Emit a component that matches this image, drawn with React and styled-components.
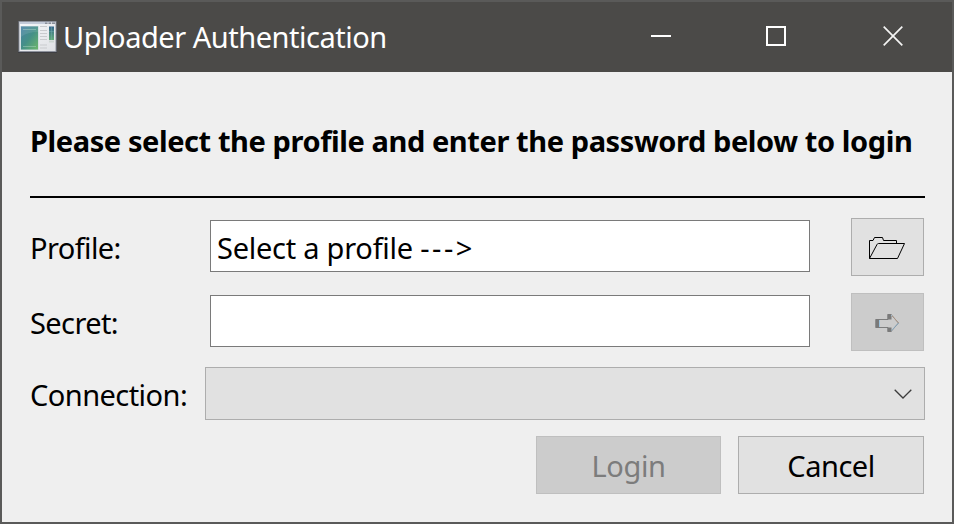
import React from "react";
import styled, { createGlobalStyle } from "styled-components";

const GlobalStyle = createGlobalStyle`
  * { box-sizing: border-box; }
  body {
    margin: 0;
    overflow: hidden;
    font-family: "Noto Sans", "Open Sans", sans-serif;
    font-size: 29px;
    color: #000;
  }
`;

const Window = styled.div`
  width: 954px;
  height: 524px;
  border: 2px solid #5a5a59;
  background: #efefef;
  display: flex;
  flex-direction: column;
`;

const TitleBar = styled.header`
  height: 70px;
  flex: none;
  padding-left: 16px;
  background: #4b4a48;
  color: #fff;
  display: flex;
  align-items: center;
`;

const AppIcon = styled.svg`
  width: 39px;
  height: 33px;
  flex: none;
  margin: 0 6px 2px 0;
`;

const Text = styled.span`
  display: block;
  white-space: pre;
  line-height: 40px;
  letter-spacing: ${(p) => p.$spacing || 0}px;
  padding-top: ${(p) => p.$drop || 0}px;
`;

const Controls = styled.div`
  display: flex;
  margin-left: auto;
`;

const ControlButton = styled.button`
  width: ${(p) => p.$width}px;
  height: 70px;
  border: 0;
  padding: 0 0 2px;
  background: none;
  color: #fff;
  display: flex;
  align-items: center;
  justify-content: center;
`;

const Body = styled.main`
  padding: 48px 27px 0 28px;
  display: flex;
  flex-direction: column;
`;

const Heading = styled.h1`
  margin: 0;
  height: 78px;
  border-bottom: 2px solid #000;
  font-size: 29px;
  font-weight: 700;
  line-height: 42px;
  letter-spacing: ${(p) => p.$spacing}px;
  white-space: nowrap;
`;

const Row = styled.div`
  display: grid;
  grid-template-columns: ${(p) => p.$columns};
  align-items: center;
  height: ${(p) => p.$height}px;
  margin-top: ${(p) => p.$gap}px;
`;

const Field = styled.div`
  height: 52px;
  margin-top: -2px;
  border: 1px solid #7a7a7a;
  background: #fff;
  padding: 7px 0 0 6px;
  display: flex;
`;

const Combo = styled.div`
  height: 53px;
  border: 1px solid #adadad;
  background: #e1e1e1;
  display: flex;
  align-items: center;
  justify-content: flex-end;
  padding-right: 12px;
`;

const Button = styled.button`
  width: ${(p) => p.$width}px;
  height: 58px;
  padding: 0;
  font: inherit;
  color: #000;
  background: #e1e1e1;
  border: 1px solid #adadad;
  display: flex;
  align-items: center;
  justify-content: center;
  &:disabled {
    color: #7c7c7c;
    background: #ccc;
    border-color: #bfbfbf;
  }
`;

const IconButton = styled(Button)`
  justify-self: end;
  margin-right: 1px;
  padding-top: 2px;
`;

const Actions = styled.footer`
  display: flex;
  justify-content: flex-end;
  gap: 17px;
  margin: 16px 1px 0 0;
`;

function WindowIcon() {
  return (
    <AppIcon viewBox="0 0 39 33">
      <defs>
        <linearGradient id="pane" x1="0" y1="0" x2="1" y2="1">
          <stop offset="0" stopColor="#4780a5" />
          <stop offset=".5" stopColor="#459087" />
          <stop offset="1" stopColor="#6db76b" />
        </linearGradient>
        <linearGradient id="strip" x1="0" y1="0" x2="0" y2="1">
          <stop offset="0" stopColor="#35668d" />
          <stop offset="1" stopColor="#63ad78" />
        </linearGradient>
        <linearGradient id="frame" x1="0" y1="0" x2="1" y2="1">
          <stop offset="0" stopColor="#f7f8fa" />
          <stop offset="1" stopColor="#dfe1e5" />
        </linearGradient>
      </defs>
      <rect x="0" y="1" width="39" height="32" fill="#3d3e43" />
      <rect x=".5" y="1" width="38" height="31" fill="#8e929c" />
      <rect x="1.5" y="2" width="36" height="29" fill="url(#frame)" />
      <rect x="2" y="2" width="35" height="2" fill="#c4cbd9" />
      <path d="M27 2.5h10v1.5H27z" fill="#8a8f99" />
      <path d="M30 2v2M33.5 2v2" stroke="#d5d8e0" />
      <rect x="2.5" y="6" width="18" height="24" fill="#c0d3d7" />
      <rect x="3" y="6.500" width="17" height="23" fill="url(#pane)" />
      <path d="M3 17Q9 12 20 12V6.500H3z" fill="#fff" opacity=".1" />
      <path d="M5 9.500h13M5 26.500h13" stroke="#bce0cf" opacity=".4" />
      <path d="M22 6.500h7M22 10.500h7M22 13.500h7M22 16.500h7M22 19.500h7M22 25h7M22 28h7" stroke="#c9cbce" />
      <rect x="31" y="6.500" width="5" height="13.500" fill="url(#strip)" />
      <path d="M31 11.500h5M33.500 7v13" stroke="#78b3b2" strokeWidth=".4" />
      <rect x="31" y="20.500" width="5" height="2" fill="#ccd5d1" />
    </AppIcon>
  );
}

function FolderIcon() {
  return (
    <svg width="37" height="24" viewBox="0 0 37 24" fill="none" stroke="#000">
      <path d="M.5 22.500V4.500h3.500l1.500-3h8l1 3h13v3" />
      <path d="M.5 22.500 8 8.500q.5-1 1.500-1h26l-7 15z" />
    </svg>
  );
}

function ArrowIcon() {
  return (
    <svg width="25" height="20" viewBox="0 0 25 20" fill="none">
      <path d="M1 6.500h12V1.500h3L23.500 10 16 18.500h-3v-4H1z" stroke="#7d7d7d" />
      <path d="M.5 6h4v9h-4zM12.500 1h4v5.500h-4zM12.500 14.500h4V19h-4z" fill="#7a7a7a" />
      <path d="M4.500 7v7M16.500 2v1" stroke="#9ec3dd" />
      <path d="M17 2.500 23.500 10" stroke="#b59b88" strokeWidth=".8" />
      <path d="M16.500 17.500 23.500 10" stroke="#8cb5d2" strokeWidth=".8" />
    </svg>
  );
}

export default function App() {
  return (
    <>
      <GlobalStyle />
      <Window>
        <TitleBar>
          <WindowIcon />
          <Text $spacing={-0.48}>Uploader Authentication</Text>
          <Controls>
            <ControlButton $width={114} aria-label="Minimize">
              <svg width="20" height="20"><path d="M0 10h20" stroke="#fff" strokeWidth="2" /></svg>
            </ControlButton>
            <ControlButton $width={116} aria-label="Maximize">
              <svg width="20" height="20"><path d="M1 1h18v18H1z" fill="none" stroke="#fff" strokeWidth="2" /></svg>
            </ControlButton>
            <ControlButton $width={118} aria-label="Close">
              <svg width="20" height="20"><path d="m.7.700 18.600 18.600M19.300.700.700 19.300" stroke="#f4f4f3" strokeWidth="1.700" /></svg>
            </ControlButton>
          </Controls>
        </TitleBar>
        <Body>
          <Heading $spacing={-0.41}>Please select the profile and enter the password below to login</Heading>
          <Row $columns="180px 600px 1fr" $height={58} $gap={20}>
            <Text $drop={2} $spacing={-0.6}>Profile:</Text>
            <Field>
              <Text $spacing={-0.25}>Select a profile </Text>
              <Text $spacing={2.5}>---&gt;</Text>
            </Field>
            <IconButton $width={73} aria-label="Browse profiles"><FolderIcon /></IconButton>
          </Row>
          <Row $columns="180px 600px 1fr" $height={58} $gap={17}>
            <Text $drop={2} $spacing={-0.6}>Secret:</Text>
            <Field />
            <IconButton $width={73} disabled aria-label="Submit secret"><ArrowIcon /></IconButton>
          </Row>
          <Row $columns="175px 1fr" $height={53} $gap={16}>
            <Text $drop={3} $spacing={-0.55}>Connection:</Text>
            <Combo>
              <svg width="18" height="10" fill="none"><path d="m.7.800 8.300 8.200L17.300.800" stroke="#3c3c3c" strokeWidth="1.300" /></svg>
            </Combo>
          </Row>
          <Actions>
            <Button $width={185} disabled><Text $drop={2} $spacing={-0.4}>Login</Text></Button>
            <Button $width={186}><Text $drop={2} $spacing={-0.5}>Cancel</Text></Button>
          </Actions>
        </Body>
      </Window>
    </>
  );
}
